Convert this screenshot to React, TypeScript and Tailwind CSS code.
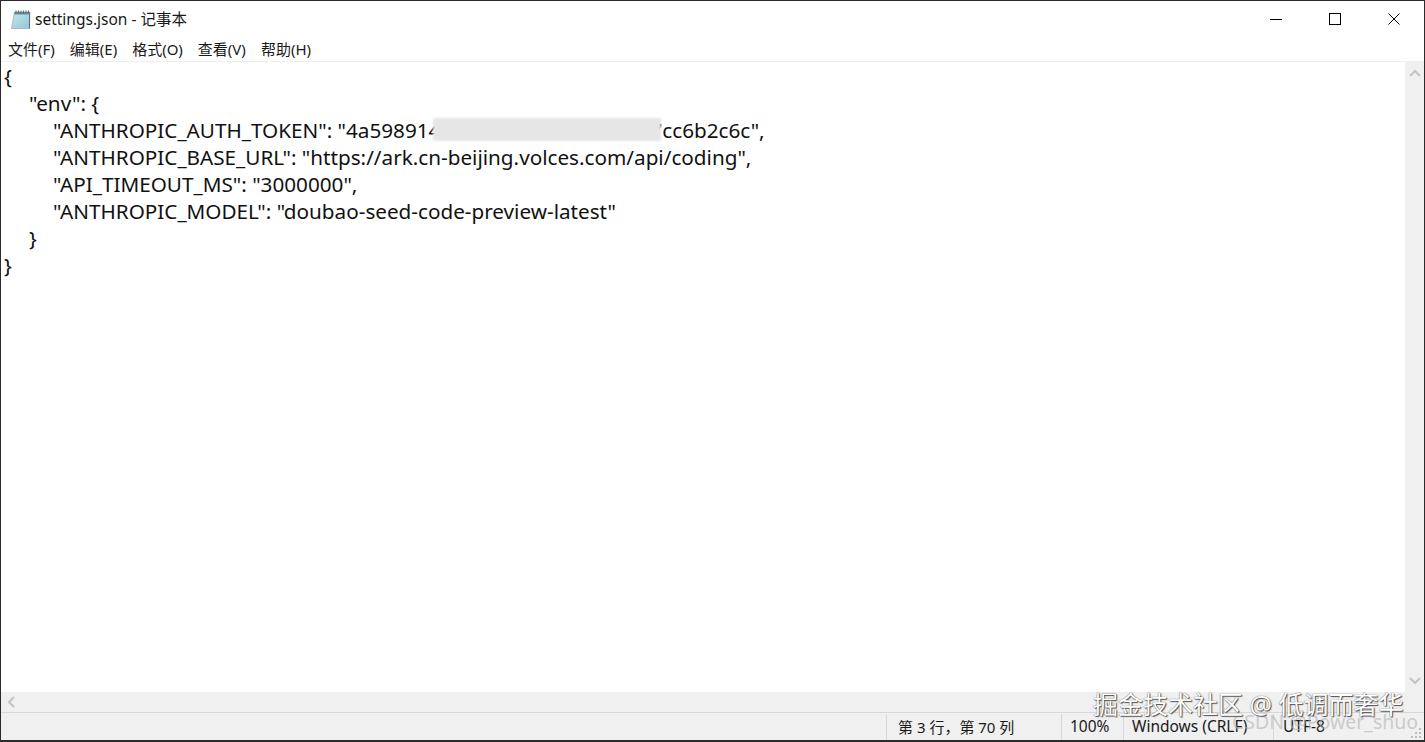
const uiFont = "font-['Noto_Sans','Noto_Sans_CJK_SC',sans-serif]";

const menus = ['文件(F)', '编辑(E)', '格式(O)', '查看(V)', '帮助(H)'];

function NotepadIcon() {
  return (
    <svg width="20" height="21" viewBox="0 0 20 21" className="shrink-0">
      <defs>
        <linearGradient id="page" x1="0" y1="0" x2="1" y2="1">
          <stop offset="0" stopColor="#c8e6ee" />
          <stop offset="1" stopColor="#8fc7d8" />
        </linearGradient>
      </defs>
      <path d="M3.5 3h15.5l-0.5 16.5H0.5z" fill="url(#page)" stroke="#98a8ae" strokeWidth="0.7" />
      <path d="M3.5 3h15.5v2.5H3.2z" fill="#6f8c9c" />
      <path d="M5 1.5v3M7.5 1.5v3M10 1.5v3M12.5 1.5v3M15 1.5v3M17.5 1.5v3" stroke="#4c6372" strokeWidth="0.9" />
      <path d="M18.5 5v14.5" stroke="#5f7480" strokeWidth="1" />
    </svg>
  );
}

function SizeGrip() {
  return (
    <svg width="12" height="12" viewBox="0 0 12 12" className="absolute bottom-[1px] right-[2px]">
      <path d="M9 1h2v2H9zM5 5h2v2H5zM9 5h2v2H9zM1 9h2v2H1zM5 9h2v2H5zM9 9h2v2H9z" fill="#bdbdbd" />
    </svg>
  );
}

export default function App() {
  return (
    <div className={`relative flex h-[742px] w-[1425px] flex-col overflow-hidden border border-b-2 border-[#2b2b2b] bg-white text-[#1a1a1a] ${uiFont}`}>
      <div className="flex h-[36px] shrink-0 items-center">
        <div className="flex items-center gap-[4px] pl-[10px] pt-[1px] text-[15.5px]">
          <NotepadIcon />
          <span>settings.json - 记事本</span>
        </div>
        <div className="ml-auto flex items-center pr-[1px]">
          <div className="flex h-[36px] w-[59px] items-center justify-center">
            <div className="h-px w-[12px] bg-black" />
          </div>
          <div className="flex h-[36px] w-[59px] items-center justify-center">
            <div className="h-[12px] w-[12px] border border-black" />
          </div>
          <div className="flex h-[36px] w-[59px] items-center justify-center">
            <svg width="12" height="12" viewBox="0 0 12 12">
              <path d="M0.5 0.5l11 11M11.5 0.5l-11 11" stroke="black" strokeWidth="1" />
            </svg>
          </div>
        </div>
      </div>

      <div className="flex h-[25px] shrink-0 items-center gap-[15px] border-b border-[#f0f0f0] pl-[7px] pt-[1px] text-[15px]">
        {menus.map((m) => (
          <span key={m}>{m}</span>
        ))}
      </div>

      <div className="flex min-h-0 flex-1">
        <div className="min-w-0 flex-1 overflow-hidden whitespace-pre pl-[3px] pt-[1px] font-['Noto_Sans',sans-serif] text-[20.7px] leading-[27px] text-[#111]">
          <div>{'{'}</div>
          <div className="pl-[25px]">{'"env": {'}</div>
          <div className="pl-[49px]">
            {'"ANTHROPIC_AUTH_TOKEN": "4a598914'}
            <span className="inline-block w-[210px]" />
            {'7cc6b2c6c",'}
          </div>
          <div className="pl-[49px]">{'"ANTHROPIC_BASE_URL": "https://ark.cn-beijing.volces.com/api/coding",'}</div>
          <div className="pl-[49px]">{'"API_TIMEOUT_MS": "3000000",'}</div>
          <div className="pl-[49px]">{'"ANTHROPIC_MODEL": "doubao-seed-code-preview-latest"'}</div>
          <div className="pl-[25px]">{'}'}</div>
          <div>{'}'}</div>
        </div>
        <div className="flex w-[19px] shrink-0 flex-col items-center justify-between bg-[#f0f0f0] py-[7px]">
          <svg width="12" height="8" viewBox="0 0 12 8">
            <path d="M1 7l5-5 5 5" fill="none" stroke="#c4c4c4" strokeWidth="2" />
          </svg>
          <svg width="12" height="8" viewBox="0 0 12 8">
            <path d="M1 1l5 5 5-5" fill="none" stroke="#c4c4c4" strokeWidth="2" />
          </svg>
        </div>
      </div>

      <div className="flex h-[20px] shrink-0 items-center bg-[#f0f0f0] pl-[6px]">
        <svg width="8" height="12" viewBox="0 0 8 12">
          <path d="M7 1L2 6l5 5" fill="none" stroke="#c4c4c4" strokeWidth="2" />
        </svg>
      </div>

      <div className="relative flex h-[28px] shrink-0 border-t border-[#d8d8d8] bg-[#f0f0f0] pt-[1px] text-[15px]">
        <div className="flex-1" />
        <div className="flex w-[175px] items-center border-l border-[#d8d8d8] pl-[11px]">第 3 行，第 70 列</div>
        <div className="flex w-[62px] items-center border-l border-[#d8d8d8] pl-[8px] text-[15.5px]">100%</div>
        <div className="flex w-[150px] items-center border-l border-[#d8d8d8] pl-[8px] text-[15.5px]">Windows (CRLF)</div>
        <div className="flex w-[151px] items-center border-l border-[#d8d8d8] pl-[9px] text-[15.5px]">UTF-8</div>
        <SizeGrip />
      </div>

      {/* redacted part of the token */}
      <div className="absolute left-[432px] top-[117px] h-[23px] w-[228px] bg-[#e6e6e6] blur-[1px]" />

      {/* site watermarks */}
      <div className="absolute left-[1231px] top-[706px] whitespace-nowrap text-[19.5px] text-[#b0b0b0]/60">CSDN @Power_shuo</div>
      <div className="absolute left-[1092px] top-[685px] whitespace-nowrap text-[25px] text-white [text-shadow:0_0_1px_#333,1px_1px_1px_#555]">
        掘金技术社区 @ 低调而奢华
      </div>
    </div>
  );
}
